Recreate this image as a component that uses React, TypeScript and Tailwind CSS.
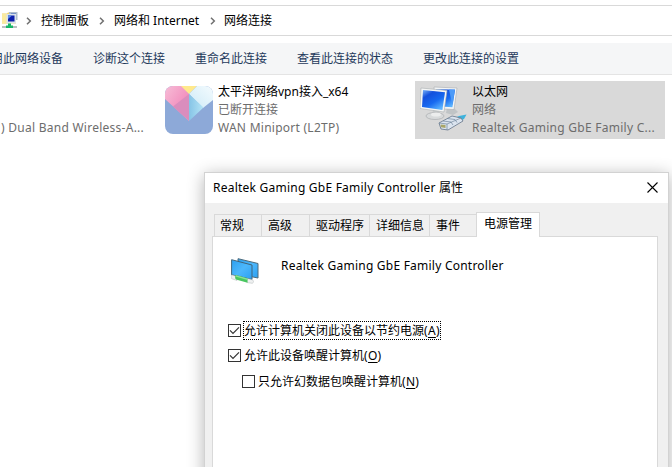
import type { ReactNode } from "react";

function Chevron() {
  return (
    <svg width="6" height="8" viewBox="0 0 6 8" fill="none" stroke="#707070" strokeWidth="1.5" className="shrink-0">
      <path d="M1 .8 4.3 4 1 7.2" />
    </svg>
  );
}

function FolderIcon() {
  return (
    <svg width="16" height="17" viewBox="0 0 16 17" className="shrink-0">
      <path d="M0 1.500h5l1-1h8v11H0z" fill="#efd36c" />
      <path d="M0 2h5v9.500H0z" fill="#faeb9e" />
      <rect x="7" y="0" width="8.500" height="8" fill="#aebccb" />
      <rect x="9" y="1.500" width="5" height="5" fill="#3a66c8" />
      <rect x="4.500" y="2" width="9.500" height="9.500" fill="#dbe3ea" />
      <rect x="6" y="3.500" width="6.500" height="6" fill="#0d1fae" />
      <path d="M6 3.500h4L6 7z" fill="#5d8fe8" />
      <rect x="0" y="14" width="15" height="2" fill="#b9bfc2" />
      <path d="M6 11.500h3v2h2V16H4v-2.500h2z" fill="#18b768" />
    </svg>
  );
}

function VpnIcon() {
  return (
    <svg width="48" height="48" viewBox="0 0 48 48" className="shrink-0">
      <defs>
        <clipPath id="vpn"><rect width="48" height="48" rx="8" /></clipPath>
        <linearGradient id="vpnPink" x1="0" y1="0" x2="1" y2="1">
          <stop stopColor="#f7bdd7" /><stop offset=".6" stopColor="#f291bf" /><stop offset="1" stopColor="#efa9cb" />
        </linearGradient>
        <linearGradient id="vpnCyan" x1="0" y1="0" x2="1" y2="0">
          <stop stopColor="#86c4e6" /><stop offset="1" stopColor="#b5e4f6" />
        </linearGradient>
        <linearGradient id="vpnWhite" x1="0" y1="1" x2="1" y2="0">
          <stop stopColor="#cdeaf7" /><stop offset="1" stopColor="#f4fbfe" />
        </linearGradient>
      </defs>
      <g clipPath="url(#vpn)">
        <rect width="48" height="48" fill="#8da9d8" />
        <path d="M0 0h17l7 8v27L0 13z" fill="url(#vpnPink)" />
        <path d="M24 8v27L8 20.500z" fill="#da8dbd" />
        <path d="M16 0h16l-8 8z" fill="#ffe98c" />
        <path d="M32 0h16v14L38 22 24 8z" fill="url(#vpnWhite)" />
        <path d="M24 8l14.500 13.500L24 35z" fill="url(#vpnCyan)" />
      </g>
    </svg>
  );
}

function EthernetIcon() {
  return (
    <svg width="48" height="48" viewBox="0 0 48 48" className="shrink-0">
      <defs>
        <linearGradient id="ethScreen" x1="0" y1="0" x2=".7" y2="1">
          <stop stopColor="#7fb8fa" /><stop offset=".3" stopColor="#1450dc" /><stop offset=".65" stopColor="#1769f0" /><stop offset="1" stopColor="#5cb4ff" />
        </linearGradient>
      </defs>
      <path d="M27 22h7l4 4-5 3-7-2z" fill="#c0c4c6" />
      <path d="M14 1l23 1-3 21.500-19-1z" fill="#f3f5f6" stroke="#a7abae" strokeWidth=".6" />
      <path d="M16 3l19 .8-2.600 17.500-15-1z" fill="url(#ethScreen)" />
      <path d="M29 3.500h6l-2.600 16z" fill="#4b9af8" />
      <path d="M13 24h6l1 6h-8z" fill="#c6c9ca" />
      <ellipse cx="15" cy="30" rx="9" ry="3.500" fill="#d8dadb" stroke="#aaaeb0" strokeWidth=".7" />
      <ellipse cx="16" cy="28.500" rx="5" ry="2" fill="#eceded" />
      <path d="M1 2l26 2.500-3 21.500L0 22.500z" fill="#f5f6f6" stroke="#aaaeb0" strokeWidth=".6" />
      <path d="M3 4l22 2.300-2.600 17.700L2 21z" fill="url(#ethScreen)" />
      <path d="M35 32l4-2 7.500-1.500L44 33l-6 3z" fill="#3db2dc" />
      <path d="M19 37l13-7 9 2 2 3-15 9-7-1z" fill="#dbe4ef" stroke="#637488" strokeWidth=".8" />
      <path d="M19 37l8 1 14-6M27 38v6M23 35l8 1 2 3M27 32.500l8 1 2 3" fill="none" stroke="#71869c" strokeWidth=".7" />
      <path d="M20.500 38.500l5 .5v3l-4.500-.8z" fill="#a8a568" />
    </svg>
  );
}

function AdapterIcon() {
  return (
    <svg width="28" height="26" viewBox="0 0 28 26" className="shrink-0">
      <defs>
        <linearGradient id="adapter" x1="0" y1="0" x2="1" y2="1">
          <stop stopColor="#2ba0f0" /><stop offset=".5" stopColor="#4cb7fc" /><stop offset="1" stopColor="#2b9ff0" />
        </linearGradient>
      </defs>
      <path d="M7 .7l20 4.800v14.500L7 16z" fill="url(#adapter)" stroke="#4c6b7c" />
      <path d="M.6 1.700l20.400 5.300v14.500L.6 16.800z" fill="url(#adapter)" stroke="#41657b" />
      <path d="M1 17l5 1.500v4l-5-1.700c-1.500-.7-1.500-3 0-3.800zM16 20.500l5 1.200c2 .8 2 3.200 0 3.600l-5-.8z" fill="#eef0f0" stroke="#b3b9bb" strokeWidth=".5" />
      <path d="M5 17l11.500 3.200v4.500L5 21.500c-1.200-1.200-1.200-3.600 0-4.500z" fill="#49c660" />
      <path d="M5 17.200l11.500 3.200v1.500L4.500 18.500z" fill="#8be096" />
    </svg>
  );
}

function Connection({ icon, name, status, device, className, textClass }: {
  icon: ReactNode; name: string; status: string; device: string; className: string; textClass: string;
}) {
  return (
    <div className={`flex h-[58px] ${className}`}>
      {icon}
      <div className={`whitespace-nowrap leading-[18px] text-[#6d6d6d] ${textClass}`}>
        <div className="text-black">{name}</div>
        <div>{status}</div>
        <div className="tracking-[0.26px]">{device}</div>
      </div>
    </div>
  );
}

function CheckRow({ label, hotkey, checked, focused, className }: {
  label: string; hotkey: string; checked?: boolean; focused?: boolean; className: string;
}) {
  return (
    <div className={`flex h-[19px] items-center ${className}`}>
      <span className="flex size-[13px] shrink-0 items-center justify-center border border-[#333] bg-white">
        {checked && (
          <svg width="11" height="11" viewBox="0 0 11 11" fill="none" stroke="#333" strokeWidth="1.200">
            <path d="M1 5.300 4 8.300 10 2.300" />
          </svg>
        )}
      </span>
      <span className={`ml-0.5 flex h-[19px] items-center border border-dotted whitespace-nowrap ${focused ? "border-black" : "border-transparent"}`}>
        {label}<span className="tracking-[0.3px]">(<span className="underline underline-offset-2">{hotkey}</span>)</span>
      </span>
    </div>
  );
}

function Tab({ children, className }: { children: ReactNode; className: string }) {
  return (
    <div className={`flex h-[22px] items-center border-t border-r border-[#d9d9d9] whitespace-nowrap ${className}`}>
      {children}
    </div>
  );
}

function PropertiesDialog() {
  return (
    <div className="absolute top-[172px] left-[204px] flex h-[520px] w-[465px] flex-col border border-[#d2d2d2] bg-[#f0f0f0] shadow-[0_3px_16px_rgba(0,0,0,0.3)]">
      <div className="flex h-[30px] shrink-0 items-center justify-between bg-white pr-2.5 pl-2">
        <span className="tracking-[0.23px] whitespace-nowrap">Realtek Gaming GbE Family Controller <span className="tracking-normal">属性</span></span>
        <svg width="11" height="11" viewBox="0 0 11 11" stroke="#000" strokeWidth="1.100" className="-mt-0.5">
          <path d="M.5 .5l10 10M10.500 .5l-10 10" />
        </svg>
      </div>
      <div className="mt-[9px] flex h-6 shrink-0 items-end pl-[9px]">
        <Tab className="w-12 border-l pl-[5px]">常规</Tab>
        <Tab className="w-12 pl-1.5">高级</Tab>
        <Tab className="w-[60px] pl-1.5">驱动程序</Tab>
        <Tab className="w-[60px] pl-1.5">详细信息</Tab>
        <Tab className="w-[46px] border-r-0 pl-1.5">事件</Tab>
        <div className="z-10 -mb-px flex h-[25px] w-16 items-center border border-b-0 border-[#d9d9d9] bg-white pb-0.5 pl-[7px] whitespace-nowrap">电源管理</div>
      </div>
      <div className="mr-2.5 ml-[7px] flex-1 border border-[#d9d9d9] bg-white">
        <div className="flex pt-[21px] pl-[18px]">
          <AdapterIcon />
          <span className="-mt-px ml-[22px] tracking-[0.23px] whitespace-nowrap">Realtek Gaming GbE Family Controller</span>
        </div>
        <div className="mt-[37px] flex flex-col pl-[15px]">
          <CheckRow label="允许计算机关闭此设备以节约电源" hotkey="A" checked focused className="" />
          <CheckRow label="允许此设备唤醒计算机" hotkey="O" checked className="mt-1.5" />
          <CheckRow label="只允许幻数据包唤醒计算机" hotkey="N" className="mt-[7px] ml-3.5" />
        </div>
      </div>
    </div>
  );
}

export default function App() {
  return (
    <div className="relative h-[467px] w-[672px] overflow-hidden bg-white font-['Noto_Sans','Noto_Sans_CJK_SC',sans-serif] text-[12px] leading-[18px] text-black">
      <div className="mt-[5px] flex h-[31px] items-center border-y border-[#d9d9d9] pl-0.5 whitespace-nowrap">
        <FolderIcon />
        <div className="ml-2 flex items-center">
          <Chevron />
          <span className="ml-[9px] w-12">控制面板</span>
          <span className="ml-2.5"><Chevron /></span>
          <span className="ml-[9px] w-[86px]">网络和 Internet</span>
          <span className="ml-2.5"><Chevron /></span>
          <span className="ml-2">网络连接</span>
        </div>
      </div>
      <div className="mt-[7px] flex h-8 items-center gap-[30px] border-b border-[#e4e4e4] bg-[#f5f6f7] whitespace-nowrap text-[#1e395b]">
        <span className="-ml-[9px]">用此网络设备</span>
        <span>诊断这个连接</span>
        <span>重命名此连接</span>
        <span>查看此连接的状态</span>
        <span>更改此连接的设置</span>
      </div>
      <div className="mt-1.5 flex h-[58px]">
        <div className="flex w-[165px] items-end pb-0.5 pl-px leading-[18px] tracking-[0.26px] whitespace-nowrap text-[#6d6d6d]">
          ) Dual Band Wireless-A...
        </div>
        <Connection icon={<VpnIcon />} name="太平洋网络vpn接入_x64" status="已断开连接" device="WAN Miniport (L2TP)" className="w-[250px] pt-[5px]" textClass="-mt-[3px] ml-[5px]" />
        <Connection icon={<EthernetIcon />} name="以太网" status="网络" device="Realtek Gaming GbE Family C..." className="w-[250px] bg-[#d9d9d9] pt-[5px] pl-[5px]" textClass="-mt-[3px] ml-1" />
      </div>
      <PropertiesDialog />
    </div>
  );
}
